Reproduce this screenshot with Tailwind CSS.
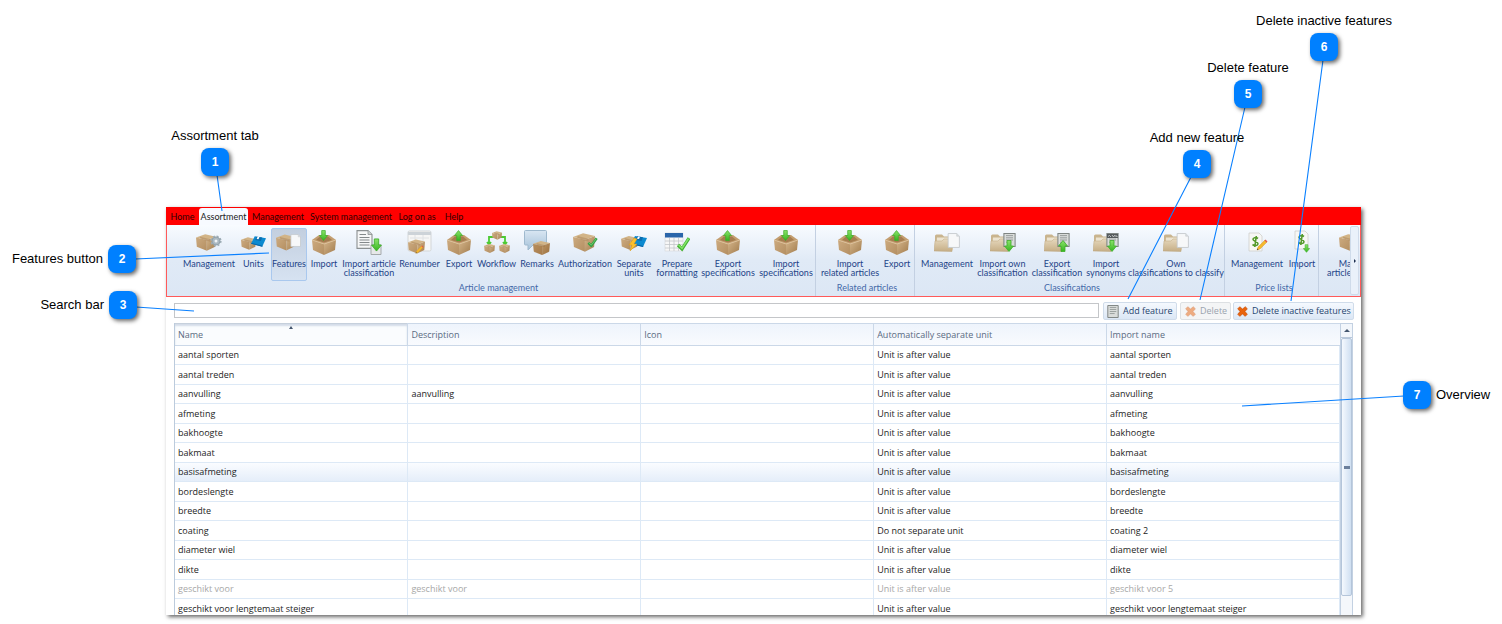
<!DOCTYPE html>
<html lang="en">
<head>
<meta charset="utf-8">
<title>Assortment features</title>
<script src="https://cdn.jsdelivr.net/npm/@tailwindcss/browser@4"></script>
</head>
<body class="bg-white">
<svg class="absolute size-0" aria-hidden="true">
  <defs>
    <linearGradient id="gl" x1="0" y1="0" x2="1" y2="1"><stop offset="0" stop-color="#ccaa7f"/><stop offset="1" stop-color="#b48f62"/></linearGradient>
    <linearGradient id="gr" x1="0" y1="0" x2="1" y2="1"><stop offset="0" stop-color="#d4b58b"/><stop offset="1" stop-color="#a17b4c"/></linearGradient>
    <linearGradient id="gg" x1="0" y1="0" x2="0" y2="1"><stop offset="0" stop-color="#8be36a"/><stop offset="1" stop-color="#35b51f"/></linearGradient>
    <linearGradient id="gb" x1="0" y1="0" x2="0" y2="1"><stop offset="0" stop-color="#d9e6f2"/><stop offset="1" stop-color="#a5c2da"/></linearGradient>
    <linearGradient id="gf" x1="0" y1="0" x2="0" y2="1"><stop offset="0" stop-color="#e6d8bd"/><stop offset="1" stop-color="#c5ad85"/></linearGradient>
  </defs>
  <symbol id="box" viewBox="0 0 24 20">
    <path d="M0 5L12 9V20L1 15Z" fill="url(#gl)"/><path d="M12 9L24 5L23 15L12 20Z" fill="url(#gr)"/>
    <path d="M0 5L7 0H17L24 5L12 9Z" fill="#c39e70"/><path d="M4 5L8 1.500H16L20 5L12 7.500Z" fill="#a57d50"/><path d="M0 5L12 9L24 5" fill="none" stroke="#dfc49d" stroke-width=".7"/>
  </symbol>
  <symbol id="shut" viewBox="0 0 24 20">
    <path d="M0 4L13 7V20L1 15Z" fill="url(#gl)"/><path d="M13 7L24 3L23 15L13 20Z" fill="url(#gr)"/>
    <path d="M0 4L11 0L24 3L13 7Z" fill="#d2b487"/><path d="M5 3L17 6V9L13 8L5 5Z" fill="#a9845a" opacity=".5"/>
  </symbol>
  <symbol id="down" viewBox="0 0 10 12"><path d="M3 .5H7V6H9.500L5 11.500L.5 6H3Z" fill="url(#gg)" stroke="#3fae2a" stroke-width=".8"/></symbol>
  <symbol id="up" viewBox="0 0 10 12"><path d="M3 11.500H7V6H9.500L5 .5L.5 6H3Z" fill="url(#gg)" stroke="#3fae2a" stroke-width=".8"/></symbol>
  <symbol id="tick" viewBox="0 0 12 12"><path d="M1 7L4.500 10.500L11 1.500" fill="none" stroke="#35a045" stroke-width="3"/><path d="M1.500 6.800L4.500 9.700L10.500 2" fill="none" stroke="#6cc96a" stroke-width="1.200"/></symbol>
  <symbol id="page" viewBox="0 0 12 14"><path d="M1 .5H9L11.500 3V13.500H1Z" fill="#f7f8f9" stroke="#c3c8cc" stroke-width=".8"/><path d="M9 .5V3H11.500" fill="#dadde0" stroke="#c3c8cc" stroke-width=".5"/></symbol>
  <symbol id="report" viewBox="0 0 14 16"><path d="M.6 .6H13.400V15.400H.6Z" fill="#d9dcda" stroke="#7f8583" stroke-width="1.200"/><path d="M3 3H11M3 5.500H11M3 8H11M3 10.500H9" stroke="#8e9492" stroke-width="1"/></symbol>
  <symbol id="floppy" viewBox="0 0 16 13"><path d="M4 1L16 3L12 12L0 9Z" fill="#0c8ad0"/><path d="M6 1.300L12 2.300L10.500 6L4.500 5Z" fill="#0a6cae"/><path d="M7 1.500L9 1.800L8 4L6 3.700Z" fill="#fff"/><path d="M0 9L12 12L12.300 11L.5 8Z" fill="#0a64a5"/></symbol>
  <symbol id="folder" viewBox="0 0 24 19"><path d="M1 3Q1 1.500 2.500 1.500H8L10 3.500H19V17H1Z" fill="#c9b48e"/><path d="M3 4.500H19V17H2Z" fill="#ece3d0"/><path d="M0 18L1 8H8L10 6H19L18 18.500Z" fill="url(#gf)" stroke="#bda67e" stroke-width=".5"/></symbol>
  <symbol id="pencil" viewBox="0 0 12 12"><path d="M1 11L2 8L9 1L11 3L4 10Z" fill="#f5b82e" stroke="#c98d1a" stroke-width=".4"/><path d="M8.500 1.500L9.500 .5L11.500 2.500L10.500 3.500Z" fill="#e2574c"/><path d="M1 11L1.500 9.500L2.500 10.500Z" fill="#333"/></symbol>
  <symbol id="cross" viewBox="0 0 12 12"><path d="M3 .8L6 3.300L9 .8L11.300 3L8.700 6L11.300 9L9 11.300L6 8.700L3 11.300L.8 9L3.300 6L.8 3Z" fill="#e9630c" stroke="#c74d06" stroke-width=".7"/></symbol>

  <symbol id="i-manage" viewBox="0 0 26 26"><use href="#shut" x="0" y="4" width="20" height="17"/><circle cx="20" cy="11" r="4" fill="#aab8c1" stroke="#8fa0ab"/><circle cx="20" cy="11" r="4.800" fill="none" stroke="#9dacb5" stroke-width="1.600" stroke-dasharray="2 1.770"/><circle cx="20" cy="11" r="1.500" fill="#eef2f5"/></symbol>
  <symbol id="i-units" viewBox="0 0 26 26"><use href="#shut" x="0" y="7" width="15" height="13"/><use href="#floppy" x="10" y="5" width="15" height="13"/></symbol>
  <symbol id="i-features" viewBox="0 0 26 26"><use href="#shut" x="0" y="4" width="19" height="17"/><use href="#page" x="14" y="4" width="11" height="13"/></symbol>
  <symbol id="i-import" viewBox="0 0 26 26"><use href="#box" x="1" y="5" width="24" height="20"/><use href="#down" x="8" y="0" width="9" height="11"/></symbol>
  <symbol id="i-export" viewBox="0 0 26 26"><use href="#box" x="1" y="5" width="24" height="20"/><use href="#up" x="8" y="0" width="9" height="11"/></symbol>
  <symbol id="i-article" viewBox="0 0 26 26"><path d="M1 .6H12L16 4.500V18.400H1Z" fill="#f6f7f7" stroke="#8c9192" stroke-width="1.100"/><path d="M12 .6V4.500H16" fill="#ccd0d1" stroke="#8c9192" stroke-width=".8"/><path d="M3.500 4.500H10M3.500 7.500H13.500M3.500 10H13.500M3.500 12.500H13.500M3.500 15H13.500" stroke="#84898b" stroke-width="1"/><path d="M15 15H25V24.500H15Z" fill="#e6e8e9" stroke="#a5aaac"/><use href="#down" x="15" y="8" width="11" height="14"/></symbol>
  <symbol id="i-renumber" viewBox="0 0 26 26"><rect x="1" y="1" width="23" height="20" rx="1.500" fill="#f6f6f5" stroke="#d3d6d8"/><path d="M1 2H24V5H1Z" fill="#cdd3d8"/><path d="M8 5V20M16 5V20M3 8H22" stroke="#e0e2e4"/><use href="#shut" x="1" y="9" width="17" height="15"/><use href="#pencil" x="8" y="15" width="9" height="9"/></symbol>
  <symbol id="i-workflow" viewBox="0 0 26 26"><path d="M5 14V7H10M16 7H21V14M3 12L5 14.500L7 12M19 12L21 14.500L23 12" fill="none" stroke="#4ccb32" stroke-width="1.800"/><use href="#shut" x="8" y="1" width="10" height="9"/><use href="#shut" x="0" y="14" width="11" height="9"/><use href="#shut" x="15" y="14" width="11" height="9"/></symbol>
  <symbol id="i-remarks" viewBox="0 0 26 26"><path d="M1.500 .5H21.500Q22.500 .5 22.500 1.500V14Q22.500 15 21.500 15H9L4 20V15H1.500Q.5 15 .5 14V1.500Q.5 .5 1.500 .5Z" fill="url(#gb)" stroke="#9fb9ce"/><use href="#shut" x="9" y="11" width="17" height="14"/><path d="M9 14L18 16L26 13L25 22L18 25L10 22Z" fill="#8e5a20" opacity=".35"/></symbol>
  <symbol id="i-auth" viewBox="0 0 26 26"><use href="#shut" x="1" y="3" width="22" height="19"/><use href="#tick" x="15" y="7" width="11" height="10"/></symbol>
  <symbol id="i-separate" viewBox="0 0 26 26"><use href="#shut" x="0" y="6" width="17" height="14"/><use href="#floppy" x="10" y="5" width="16" height="13"/><path d="M13 8L8 15H11L9 21L16 14H13L16 9Z" fill="#fbc02d" stroke="#d99a1b" stroke-width=".5"/></symbol>
  <symbol id="i-prepare" viewBox="0 0 26 26"><rect x="1" y="3" width="18" height="18" fill="#f7f7f7" stroke="#d5d7d9" stroke-width=".6"/><path d="M1 3H19V7.500H1Z" fill="#2a65aa"/><path d="M1 11H19M1 14.500H19M1 18H19M5.500 8V21M10 8V21M14.500 8V21" stroke="#c4c7ca" stroke-width=".8"/><path d="M14 15L18 19L25 8" fill="none" stroke="#3fb22f" stroke-width="3.200"/><path d="M14.500 15L18 18.300L24.500 8.500" fill="none" stroke="#83e268" stroke-width="1.500"/></symbol>
  <symbol id="i-folder" viewBox="0 0 26 26"><use href="#folder" x="0" y="3" width="24" height="19"/><use href="#page" x="13" y="3" width="13" height="15"/></symbol>
  <symbol id="i-fdown" viewBox="0 0 26 26"><use href="#folder" x="0" y="3" width="24" height="19"/><use href="#report" x="13" y="3" width="13" height="14"/><use href="#down" x="14" y="10" width="10" height="12"/></symbol>
  <symbol id="i-fup" viewBox="0 0 26 26"><use href="#folder" x="0" y="3" width="24" height="19"/><use href="#report" x="13" y="3" width="13" height="14"/><use href="#up" x="14" y="10" width="10" height="12"/></symbol>
  <symbol id="i-fsyn" viewBox="0 0 26 26"><use href="#folder" x="0" y="3" width="24" height="19"/><use href="#report" x="13" y="3" width="13" height="14"/><path d="M14 4H25V8H14Z" fill="#555a5c"/><path d="M15 6.500L16.500 5.500L18 7M19 5L20.500 7L22 5M23 7V5.500L24.500 7" fill="none" stroke="#d8dcdc" stroke-width=".8"/><use href="#down" x="14" y="10" width="10" height="12"/></symbol>
  <symbol id="i-price" viewBox="0 0 26 26"><path d="M5 3H15L18 6V21H5Z" fill="#f7f7f5" stroke="#cfcfcb" stroke-width=".8"/><path d="M14 8.500C12 7 8.800 7.500 9 9.500S14 11.500 14 13.700S10.500 16 8.500 14.500M12.300 6L10.800 17" fill="none" stroke="#559a2c" stroke-width="1.600"/><use href="#pencil" x="12" y="9" width="12" height="12"/></symbol>
  <symbol id="i-pimport" viewBox="0 0 26 26"><path d="M6 1H16L19 4V19H6Z" fill="#f7f7f5" stroke="#cfcfcb" stroke-width=".8"/><path d="M15 6.500C13 5 9.800 5.500 10 7.500S15 9.500 15 11.700S11.500 14 9.500 12.500M13.300 4L11.800 15" fill="none" stroke="#559a2c" stroke-width="1.600"/><use href="#down" x="14" y="13" width="7" height="11"/></symbol>
</svg>

<main class="relative min-h-screen overflow-hidden pt-[207px]">
  <section class="ml-[166px] mr-[141px] flex h-[408px] flex-col overflow-hidden bg-white font-['Open_Sans','Noto_Sans',sans-serif] text-[9px] shadow-[2px_2px_4px_rgba(0,0,0,0.6)]">
    <nav class="flex h-[18px] shrink-0 items-end whitespace-nowrap bg-[#ff0000] text-center font-[Lato,sans-serif] leading-4 text-[#300000]" aria-label="Ribbon tabs">
      <a href="#" class="w-[33px]">Home</a>
      <a href="#" class="h-[17px] w-[49px] rounded-t-[3px] bg-[#f7faff] pt-px text-[#222]">Assortment</a>
      <a href="#" class="w-[60px]">Management</a>
      <a href="#" class="w-[86px]">System management</a>
      <a href="#" class="w-[46px]">Log on as</a>
      <a href="#" class="w-[28px]">Help</a>
    </nav>

    <div class="flex h-[72px] shrink-0 border border-t-0 border-[#ff5a5a] bg-linear-to-b from-[#f8fbff] via-[#e0eaf6] to-[#dce7f5] font-[Lato,sans-serif] text-[#1e4488]">
      <div id="groups" class="flex min-w-0 flex-1 overflow-hidden"></div>
      <button class="my-px mr-px flex w-[9px] items-center justify-center rounded-[2px] border border-[#cfdbea] bg-[#eaf1fa]" aria-label="Scroll ribbon right"><span class="border-y-2 border-l-2 border-y-transparent border-l-[#1e3050]"></span></button>
    </div>

    <div class="flex h-[26px] shrink-0 items-center pl-2 pr-[7px] text-[#27466f]">
      <input aria-label="Search" class="h-[15px] min-w-0 flex-1 border border-[#c4c6c9] bg-white px-1 outline-none">
      <button class="ml-1 mt-0.5 flex h-[18px] w-[74px] shrink-0 items-center gap-1 rounded-[2px] border border-[#d0dcea] bg-linear-to-b from-[#f5f9fe] to-[#dce7f5] pl-[3px] whitespace-nowrap"><svg class="h-[13px] w-3"><use href="#report"/></svg>Add feature</button>
      <button disabled class="ml-[3px] mt-0.5 flex h-[18px] w-[51px] shrink-0 items-center gap-1 rounded-[2px] border border-[#dde0e3] bg-[#f4f5f6] pl-1 whitespace-nowrap text-[#9aa3ae]"><svg class="h-[11px] w-[11px] opacity-50"><use href="#cross"/></svg>Delete</button>
      <button class="ml-[2px] mt-0.5 flex h-[18px] w-[121px] shrink-0 items-center gap-1 rounded-[2px] border border-[#d0dcea] bg-linear-to-b from-[#f5f9fe] to-[#dce7f5] pl-[3px] whitespace-nowrap"><svg class="h-[11px] w-[11px]"><use href="#cross"/></svg>Delete inactive features</button>
    </div>

    <div class="mx-2 flex min-h-0 flex-1 items-start overflow-hidden border-l border-[#bccbdc]">
      <div class="min-w-0 flex-1">
      <table class="w-full table-fixed border-collapse text-left text-[#1d1d1d]">
        <thead>
          <tr class="h-[22px] bg-linear-to-b from-[#eef4fc] to-[#f9fbfe] text-[#5a6b82]">
            <th class="relative border-y border-r border-[#cbd8e8] border-t-[#c6d0dc] bg-[#fafcfe] px-[3px] font-normal shadow-[inset_0_2px_2px_#d3dce8]">Name<span class="absolute left-1/2 top-[2px] -translate-x-1/2 border-x-2 border-b-[3px] border-x-transparent border-b-[#44566f]"></span></th>
            <th class="border-y border-r border-[#cbd8e8] px-[3px] font-normal">Description</th>
            <th class="border-y border-r border-[#cbd8e8] px-[3px] font-normal">Icon</th>
            <th class="border-y border-r border-[#cbd8e8] px-[3px] font-normal">Automatically separate unit</th>
            <th class="border-y border-[#cbd8e8] px-[3px] font-normal">Import name</th>
          </tr>
        </thead>
        <tbody id="rows"></tbody>
      </table>
      </div>
      <div class="flex h-full w-[13px] shrink-0 flex-col border-x border-t border-[#c3d1e2] bg-[#f4f7fb]">
        <button aria-label="Scroll up" class="flex h-[14px] shrink-0 items-center justify-center border-b border-[#b9c8da] bg-[#f2f6fb]"><span class="border-x-[3px] border-b-[3px] border-x-transparent border-b-[#44566f]"></span></button>
        <div class="flex h-[258px] items-center justify-center rounded-[2px] border border-[#b4c5da] bg-linear-to-r from-[#f5f9fe] to-[#cfdff1]"><span class="h-[3px] w-[6px] bg-[#6b7f9b]"></span></div>
      </div>
    </div>
  </section>

  <svg class="pointer-events-none absolute left-0 top-0 h-[624px] w-[400px]" fill="none" stroke="#0a80ff" stroke-width="1.100" aria-hidden="true"><path d="M217 175L222 211M135 259L269 253M136 307L194 311"/></svg>
  <svg class="pointer-events-none absolute right-0 top-0 h-[624px] w-[502px]" fill="none" stroke="#0a80ff" stroke-width="1.100" aria-hidden="true"><path d="M191 177L128 299M245 107L200 300M323 60L291 301M404 396L242 406"/></svg>

  <div class="font-['Liberation_Sans',Arial,sans-serif] text-[13px] leading-4 text-black">
    <div class="absolute left-[201px] top-[128px] flex w-7 flex-col items-center gap-1 whitespace-nowrap"><span>Assortment tab</span><b class="flex size-7 items-center justify-center rounded-lg bg-[#0080ff] text-xs text-white shadow-[2px_2px_4px_rgba(0,0,0,0.6)]">1</b></div>
    <div class="absolute left-0 top-[245px] flex w-[136px] items-center justify-end gap-[5px] whitespace-nowrap"><span>Features button</span><b class="flex size-7 items-center justify-center rounded-lg bg-[#0080ff] text-xs text-white shadow-[2px_2px_4px_rgba(0,0,0,0.6)]">2</b></div>
    <div class="absolute left-0 top-[291px] flex w-[137px] items-center justify-end gap-[5px] whitespace-nowrap"><span>Search bar</span><b class="flex size-7 items-center justify-center rounded-lg bg-[#0080ff] text-xs text-white shadow-[2px_2px_4px_rgba(0,0,0,0.6)]">3</b></div>
    <div class="absolute right-[291px] top-[130px] flex w-7 flex-col items-center gap-1 whitespace-nowrap"><span>Add new feature</span><b class="flex size-7 items-center justify-center rounded-lg bg-[#0080ff] text-xs text-white shadow-[2px_2px_4px_rgba(0,0,0,0.6)]">4</b></div>
    <div class="absolute right-[240px] top-[60px] flex w-7 flex-col items-center gap-1 whitespace-nowrap"><span>Delete feature</span><b class="flex size-7 items-center justify-center rounded-lg bg-[#0080ff] text-xs text-white shadow-[2px_2px_4px_rgba(0,0,0,0.6)]">5</b></div>
    <div class="absolute right-[164px] top-[13px] flex w-7 flex-col items-center gap-1 whitespace-nowrap"><span>Delete inactive features</span><b class="flex size-7 items-center justify-center rounded-lg bg-[#0080ff] text-xs text-white shadow-[2px_2px_4px_rgba(0,0,0,0.6)]">6</b></div>
    <div class="absolute right-0 top-[381px] flex w-[99px] items-center gap-[5px] whitespace-nowrap"><b class="flex size-7 items-center justify-center rounded-lg bg-[#0080ff] text-xs text-white shadow-[2px_2px_4px_rgba(0,0,0,0.6)]">7</b><span>Overview</span></div>
  </div>
</main>

<script>
const groups = [
  ['Article management', 'pl-[15px] w-[649px]', [
    ['manage','Management',54],['units','Units',35],['features','Features',36],['import','Import',34],
    ['article','Import article<br>classification',56],['renumber','Renumber',45],['export','Export',34],['workflow','Workflow',41],
    ['remarks','Remarks',40],['auth','Authorization',56],['separate','Separate<br>units',42],['prepare','Prepare<br>formatting',44],
    ['export','Export<br>specifications',58],['import','Import<br>specifications',58]]],
  ['Related articles', 'pl-1 w-[99px]', [['import','Import<br>related articles',60],['export','Export',34]]],
  ['Classifications', 'pl-[5px] w-[310px]', [['folder','Management',54],['fdown','Import own<br>classification',57],['fup','Export<br>classification',52],['fsyn','Import<br>synonyms',46],['folder','Own<br>classifications to classify',94]]],
  ['Price lists', 'pl-[5px] w-[94px]', [['price','Management',54],['pimport','Import',36]]],
  ['', 'pl-[7px] w-[60px]', [['manage','Ma<br>article',24]]]
];
document.getElementById('groups').innerHTML = groups.map(([title, cls, items]) => `
  <div class="${cls} flex shrink-0 flex-col border-r border-[#c3d0e2] pt-[3px]" role="group">
    <div class="flex h-[53px]">${items.map(([icon, label, w]) => `
      <button style="width:${w}px" class="flex shrink-0 flex-col whitespace-nowrap rounded-[2px] border pt-px leading-[9px] ${title ? 'items-center' : 'items-start text-right'} ${label === 'Features' ? 'border-[#a9c8ee] bg-linear-to-b from-[#c3cfdf] to-[#d6e2f1]' : 'border-transparent'}">
        <svg class="size-[26px] shrink-0 ${title ? '' : 'ml-3'}"><use href="#i-${icon}"/></svg><span class="mt-[3px]">${label}</span></button>`).join('')}
    </div>
    <div class="mt-px text-center leading-3 text-[#4468a8]">${title}</div>
  </div>`).join('');

const after = 'Unit is after value';
const rows = [
  ['aantal sporten','',after,'aantal sporten'],['aantal treden','',after,'aantal treden'],['aanvulling','aanvulling',after,'aanvulling'],
  ['afmeting','',after,'afmeting'],['bakhoogte','',after,'bakhoogte'],['bakmaat','',after,'bakmaat'],['basisafmeting','',after,'basisafmeting'],
  ['bordeslengte','',after,'bordeslengte'],['breedte','',after,'breedte'],['coating','','Do not separate unit','coating 2'],
  ['diameter wiel','',after,'diameter wiel'],['dikte','',after,'dikte'],['geschikt voor','geschikt voor',after,'geschikt voor 5'],
  ['geschikt voor lengtemaat steiger','',after,'geschikt voor lengtemaat steiger']
];
const cell = 'border-b border-r border-[#dde9f6] px-[3px] py-0';
document.getElementById('rows').innerHTML = rows.map(([n, d, u, i]) => `
  <tr class="h-[19px] leading-[12px] even:h-[20px] ${n === 'basisafmeting' ? 'bg-linear-to-b from-[#fafcff] to-[#e4edf9]' : ''} ${n === 'geschikt voor' ? 'text-[#a8a8a8]' : ''}">
    <td class="${cell}">${n}</td><td class="${cell}">${d}</td><td class="${cell}"></td><td class="${cell}">${u}</td><td class="${cell}">${i}</td>
  </tr>`).join('');
</script>
</body>
</html>
